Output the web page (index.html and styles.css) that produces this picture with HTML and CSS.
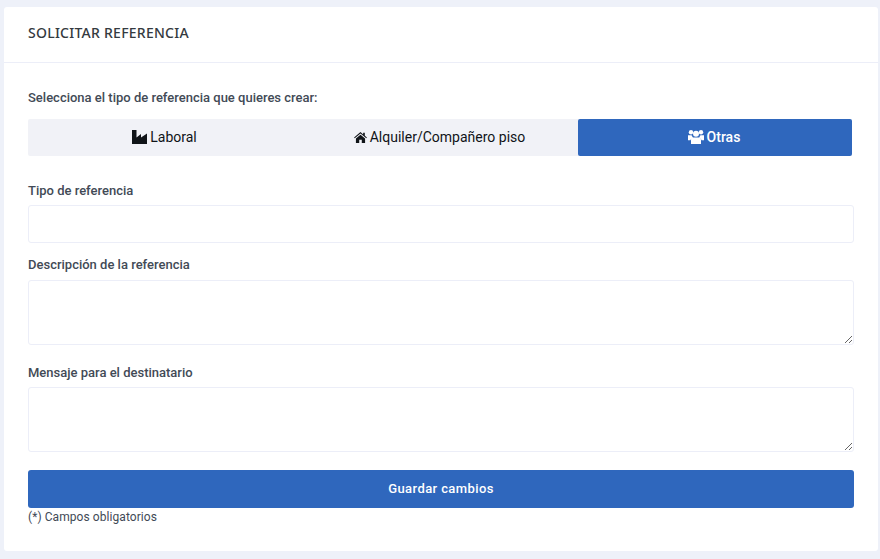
FILE: index.html
```html
<!DOCTYPE html>
<html lang="es">
<head>
<meta charset="utf-8">
<title>Solicitar referencia</title>
<link rel="stylesheet" href="styles.css">
</head>
<body>
<main class="card">
  <header class="card-header"><h1 class="card-title">SOLICITAR REFERENCIA</h1></header>
  <form class="card-body">
    <p class="intro">Selecciona el tipo de referencia que quieres crear:</p>
    <div class="tabs">
      <button type="button" class="tab">
        <svg class="icon icon-factory" viewBox="0 0 15 14"><path d="M0 0h4.500v7.400L9 4v3.400L15 3.600V14H0z"/></svg>
        <span>Laboral</span>
      </button>
      <button type="button" class="tab">
        <svg class="icon icon-home" viewBox="0 0 14 12"><path d="M7 0 0 6l.7.8L7 1.500l6.300 5.300.7-.8-2.300-2V.7h-1.800v2.100zM2 7.200V12h3.600V8.500h2.800V12H12V7.200L7 3z"/></svg>
        <span>Alquiler/Compañero piso</span>
      </button>
      <button type="button" class="tab tab-active">
        <svg class="icon icon-users" viewBox="0 0 16 14"><circle cx="3" cy="2.200" r="2.200"/><circle cx="13" cy="2.200" r="2.200"/><circle cx="8" cy="3.800" r="3"/><path d="M0 5.200h3.600c.3 1 .9 1.700 1.400 2.200-1.400.5-2.200 1.500-2.500 2.800H0zM16 5.200h-3.600c-.3 1-.9 1.700-1.400 2.200 1.400.5 2.200 1.500 2.500 2.800H16zM5 7.500h6c1.300 0 2 1.100 2 2.700V14H3v-3.800c0-1.600.7-2.700 2-2.700z"/></svg>
        <span>Otras</span>
      </button>
    </div>
    <label class="label label-first" for="tipo">Tipo de referencia</label>
    <input class="field" id="tipo" type="text">
    <label class="label label-middle" for="descripcion">Descripción de la referencia</label>
    <textarea class="field area" id="descripcion"></textarea>
    <label class="label label-after-area" for="mensaje">Mensaje para el destinatario</label>
    <textarea class="field area" id="mensaje"></textarea>
    <button type="button" class="submit">Guardar cambios</button>
    <small class="note">(*) Campos obligatorios</small>
  </form>
</main>
</body>
</html>
```
FILE: styles.css
```css
* { box-sizing: border-box; }
html, body { height: 100%; }
body {
  margin: 0;
  padding: 7px 2px 8px 4px;
  background: #eef1f9;
  font-family: Roboto, "Liberation Sans", sans-serif;
  color: #424a56;
}
.card {
  height: 544px;
  background: #fff;
  border-radius: 3px;
}
.card-header {
  height: 56px;
  padding: 0 24px 4px;
  display: flex;
  align-items: center;
  border-bottom: 1px solid #eceef8;
}
.card-title {
  margin: 0;
  font-family: "Noto Sans", sans-serif;
  font-size: 14px;
  font-weight: 500;
  letter-spacing: .25px;
  color: #343a40;
}
.card-body {
  padding: 26px 24px 0;
  display: flex;
  flex-direction: column;
}
.intro {
  margin: 0 0 12px;
  font-size: 13px;
  line-height: 18px;
  font-weight: 500;
}
.tabs {
  width: 824px;
  height: 37px;
  display: grid;
  grid-template-columns: 275px 275px 274px;
  background: #f1f2f7;
  border-radius: 2px;
}
.tab {
  border: 0;
  padding: 0 2px 1px 0;
  background: transparent;
  display: flex;
  align-items: center;
  justify-content: center;
  gap: 3px;
  font: 400 14px Roboto, sans-serif;
  color: #101418;
  border-radius: 2px;
}
.tab-active { background: #2f67bd; color: #fff; font-weight: 500; }
.icon { display: block; fill: currentColor; }
.icon-factory { width: 15px; height: 14px; }
.icon-home { width: 13px; height: 11px; }
.icon-users { width: 16px; height: 14px; }
.label {
  display: block;
  font-size: 13px;
  line-height: 17px;
  font-weight: 500;
}
.label-first { margin: 26px 0 6px; }
.label-middle { margin: 13px 0 7px; }
.label-after-area { margin: 19px 0 6px; }
.field {
  display: block;
  width: 826px;
  height: 38px;
  padding: 6px 12px;
  background: #fff;
  border: 1px solid #eceef8;
  border-radius: 3px;
  font: 13px Roboto, sans-serif;
  outline: 0;
}
.area { height: 65px; resize: vertical; }
.submit {
  width: 826px;
  height: 38px;
  margin-top: 18px;
  padding: 0 0 2px;
  border: 0;
  border-radius: 3px;
  background: #2f67bd;
  color: #fff;
  font: 500 13px Roboto, sans-serif;
  letter-spacing: .4px;
}
.note {
  margin-top: 2px;
  font-size: 12px;
  line-height: 14px;
  letter-spacing: .07px;
}
```
